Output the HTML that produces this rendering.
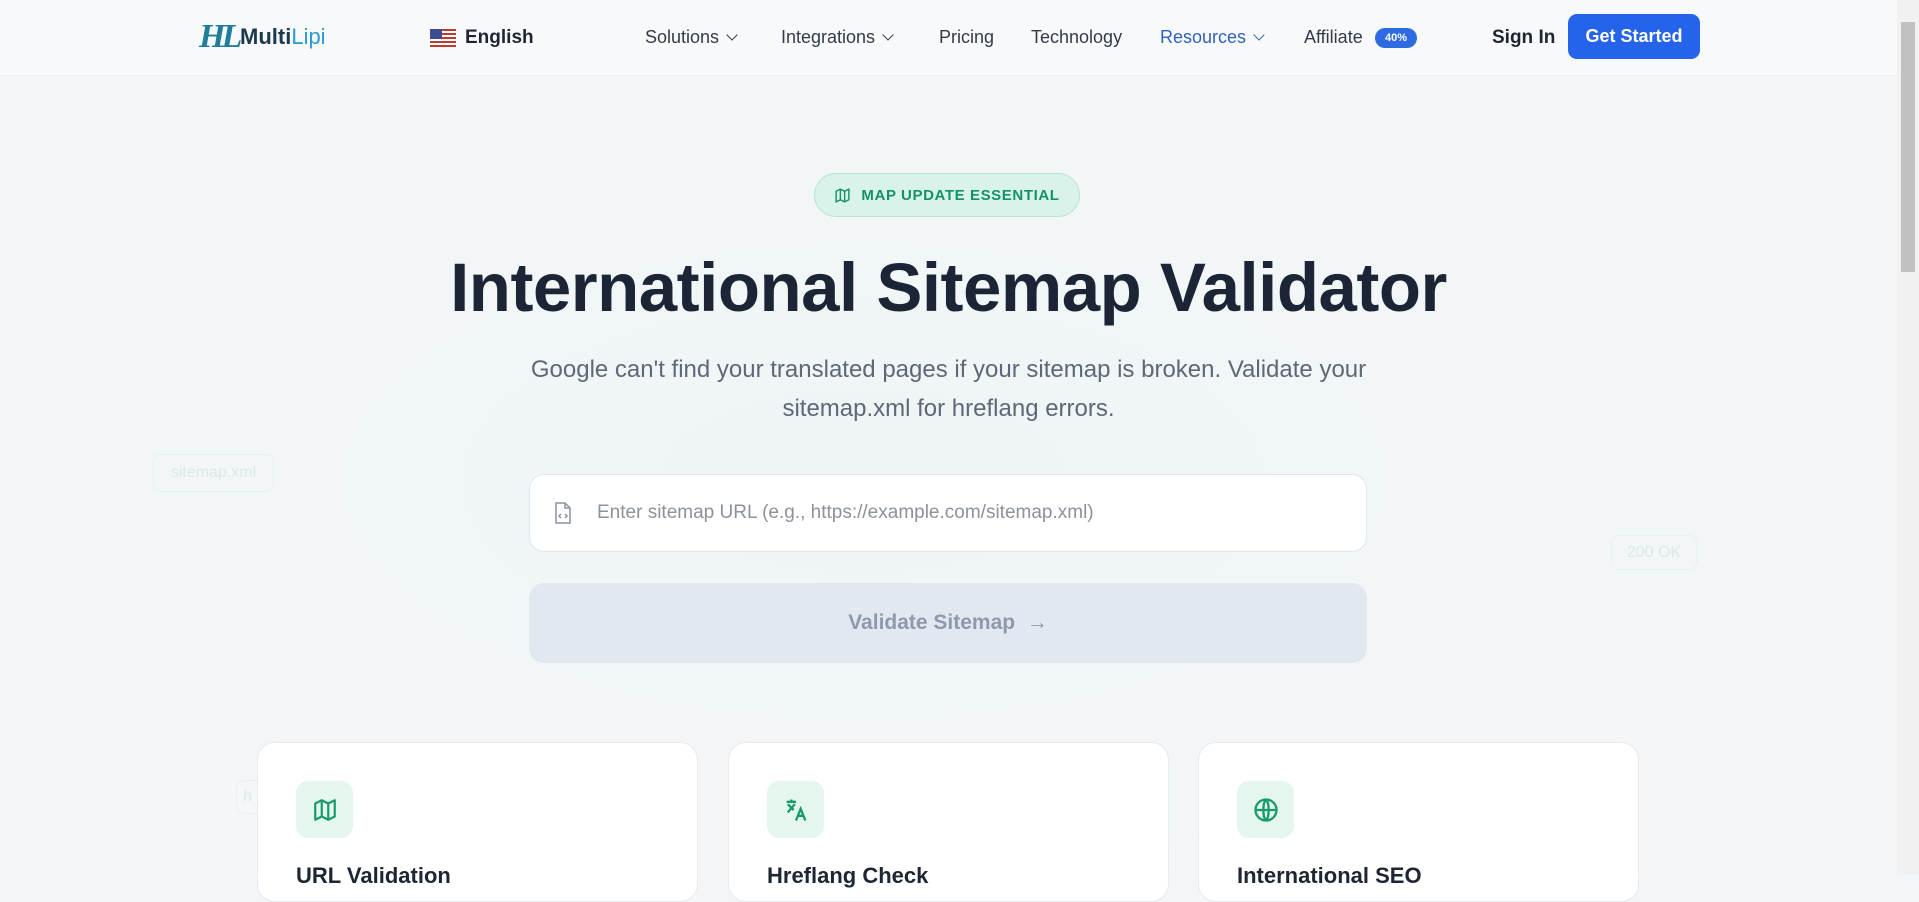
<!DOCTYPE html>
<html><head><meta charset="utf-8"><style>
*{box-sizing:border-box;margin:0;padding:0}
body{width:1919px;height:875px;overflow:hidden;font-family:"Liberation Sans",sans-serif;background:#f3f6f8;position:relative}
.bg{position:absolute;inset:0;background:radial-gradient(ellipse at 45% 55%,#eef5f4 0%,#f3f6f7 50%,#f5f6f8 100%)}
nav{position:absolute;left:0;top:0;width:1897px;height:76px;background:#f8f9fb;border-bottom:1px solid #eef0f3}
.t{position:absolute;white-space:nowrap}
.n{font-size:18px;color:#333b48;top:27px}
.chev{display:inline-block;width:8px;height:8px;border-right:1.6px solid currentColor;border-bottom:1.6px solid currentColor;transform:rotate(45deg);margin-left:9px;position:relative;top:-4px}
.sb{position:absolute;right:0;top:0;width:22px;height:875px;background:#f1f1f1}
.sb div{position:absolute;left:4px;top:22px;width:14px;height:250px;background:#c1c1c1}
.card{position:absolute;top:742px;width:441px;height:160px;background:#fff;border:1px solid #e6ebef;border-radius:18px}
.ib{position:absolute;left:38px;top:38px;width:57px;height:57px;border-radius:12px;background:#e5f6ef;display:flex;align-items:center;justify-content:center}
.ct{position:absolute;left:38px;top:120px;font-size:22px;color:#1f2633;font-weight:bold}
.ghost{position:absolute;border:1px solid #e9f1f0;border-radius:8px;color:#d9eae6;font-size:16px;display:flex;align-items:center;justify-content:center}
</style></head><body>
<div class="bg"></div>
<nav>
<div class="t" style="left:199px;top:18px;font-family:'Liberation Serif',serif;font-size:34px;font-weight:bold;color:#1f7f9a;font-style:italic;letter-spacing:-4px">HL</div>
<div class="t" style="left:240px;top:24px;font-size:22px;font-weight:bold;color:#1d3a4d">Multi<span style="color:#2b9bd1;font-weight:normal">Lipi</span></div>
<div class="t" style="left:430px;top:29px;width:26px;height:18px;background:repeating-linear-gradient(#c0392b 0 2px,#fff 2px 4px)"><div style="width:12px;height:10px;background:#3c4e8f"></div></div>
<div class="t" style="left:465px;top:27px;font-size:19px;font-weight:bold;color:#1f2633">English</div>
<div class="t n" style="left:645px">Solutions<span class="chev"></span></div>
<div class="t n" style="left:781px">Integrations<span class="chev"></span></div>
<div class="t n" style="left:939px">Pricing</div>
<div class="t n" style="left:1031px">Technology</div>
<div class="t n" style="left:1160px;color:#2f62b8">Resources<span class="chev"></span></div>
<div class="t n" style="left:1304px">Affiliate</div>
<div class="t" style="left:1375px;top:28px;width:42px;height:20px;border-radius:10px;background:#2f6be0;color:#fff;font-size:11px;font-weight:bold;text-align:center;line-height:20px">40%</div>
<div class="t" style="left:1492px;top:27px;font-size:19px;font-weight:bold;color:#1f2633">Sign In</div>
<div class="t" style="left:1568px;top:14px;width:132px;height:45px;border-radius:9px;background:#2563eb;color:#fff;font-size:18px;font-weight:bold;text-align:center;line-height:45px">Get Started</div>
</nav>
<div class="ghost" style="left:153px;top:454px;width:121px;height:38px">sitemap.xml</div>
<div class="ghost" style="left:1611px;top:535px;width:86px;height:35px">200 OK</div>
<div class="ghost" style="left:236px;top:780px;width:40px;height:34px;justify-content:flex-start;padding-left:6px">h</div>

<div class="t" style="left:814px;top:173px;width:266px;height:44px;border-radius:22px;background:#daf3ea;border:1px solid #b4e4d2;color:#139268;font-size:15px;font-weight:bold;letter-spacing:.6px;display:flex;align-items:center;justify-content:center;gap:10px">
<svg width="17" height="17" viewBox="0 0 24 24" fill="none" stroke="#139268" stroke-width="2" stroke-linejoin="round"><path d="M3 6l6-3 6 3 6-3v15l-6 3-6-3-6 3z"/><path d="M9 3v15M15 6v15"/></svg>MAP UPDATE ESSENTIAL</div>
<div class="t" style="left:0;width:1897px;top:248px;text-align:center;font-size:69px;font-weight:bold;color:#1c2536;letter-spacing:-0.5px">International Sitemap Validator</div>
<div class="t" style="left:0;width:1897px;top:350px;text-align:center;font-size:24px;line-height:39px;color:#5d6878">Google can't find your translated pages if your sitemap is broken. Validate your<br>sitemap.xml for hreflang errors.</div>
<div class="t" style="left:529px;top:474px;width:838px;height:78px;background:#fff;border:1px solid #dfe6ee;border-radius:15px">
<svg style="position:absolute;left:24px;top:27px" width="18" height="23" viewBox="0 0 18 23" fill="none" stroke="#8a94a3" stroke-width="1.5"><path d="M2 1h9l5 5v15H2z"/><path d="M11 1v5h5"/><path d="M7 12l-2 2 2 2M11 12l2 2-2 2"/></svg>
<div class="t" style="left:67px;top:27px;font-size:19px;color:#8b929c">Enter sitemap URL (e.g., https://example.com/sitemap.xml)</div></div>
<div class="t" style="left:529px;top:583px;width:838px;height:80px;background:#e2e8f0;border-radius:15px;color:#8e9aab;font-size:21px;font-weight:bold;text-align:center;line-height:80px">Validate Sitemap &nbsp;→</div>

<div class="card" style="left:257px"><div class="ib"><svg width="26" height="26" viewBox="0 0 24 24" fill="none" stroke="#179a6c" stroke-width="2" stroke-linejoin="round"><path d="M3 6l6-3 6 3 6-3v15l-6 3-6-3-6 3z"/><path d="M9 3v15M15 6v15"/></svg></div><div class="ct">URL Validation</div></div>
<div class="card" style="left:728px"><div class="ib"><svg width="28" height="28" viewBox="0 0 24 24" fill="none" stroke="#179a6c" stroke-width="2"><path d="M4 5h8M8 3v2M5 7l5 5M11 7l-6 7"/><path d="M12 21l4-10 4 10M13.5 17h5"/></svg></div><div class="ct">Hreflang Check</div></div>
<div class="card" style="left:1198px"><div class="ib"><svg width="28" height="28" viewBox="0 0 24 24" fill="none" stroke="#179a6c" stroke-width="2"><circle cx="12" cy="12" r="9"/><path d="M3 12h18M12 3c3 3 3 15 0 18M12 3c-3 3-3 15 0 18"/></svg></div><div class="ct">International SEO</div></div>
<div class="sb"><div></div></div>
</body></html>
